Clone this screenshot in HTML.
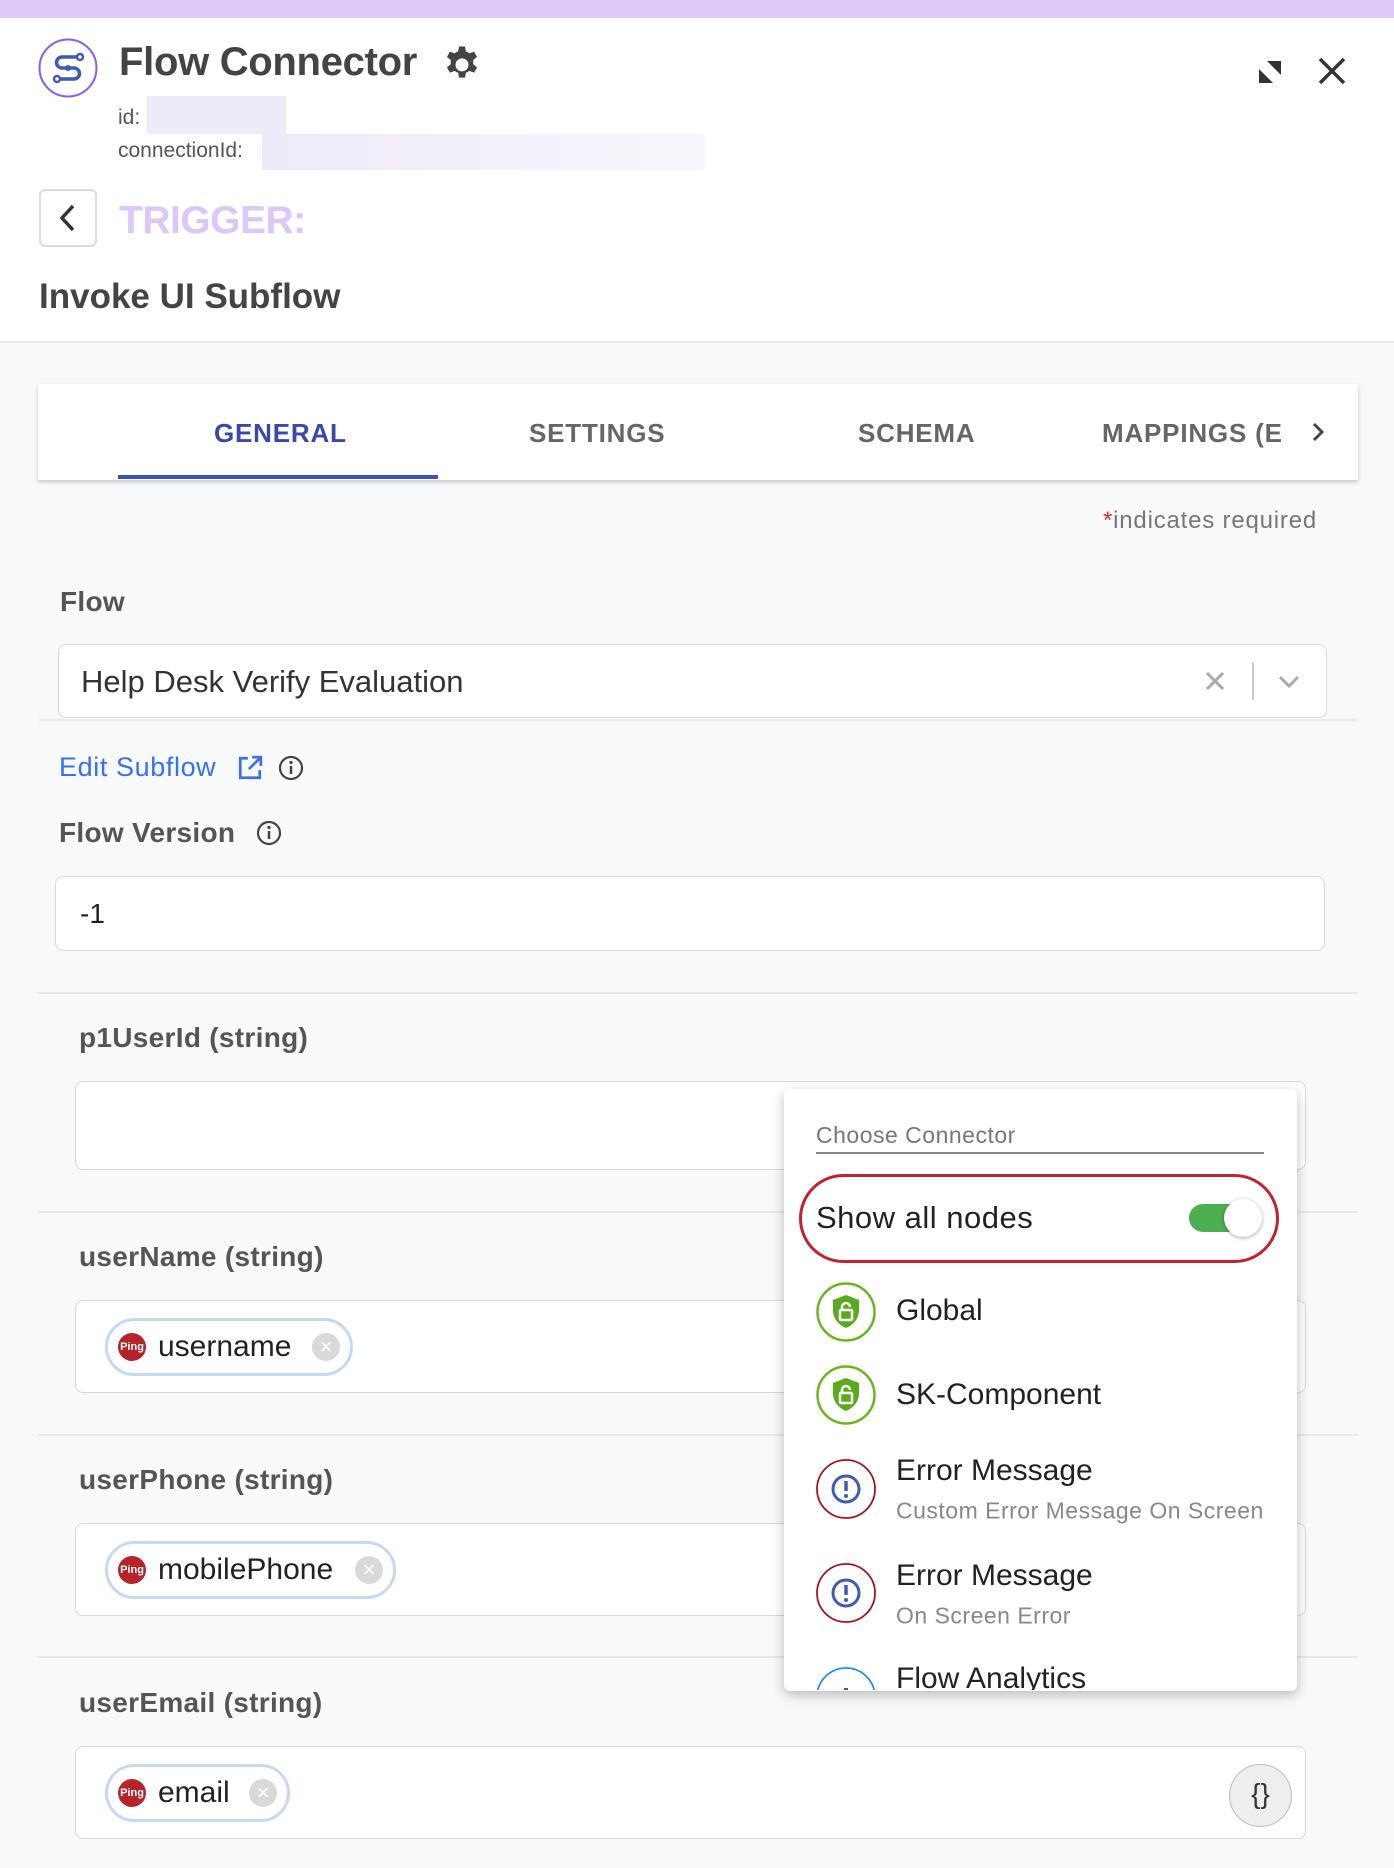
<!DOCTYPE html>
<html><head><meta charset="utf-8"><style>
*{box-sizing:border-box;margin:0;padding:0}
body{width:1394px;height:1868px;overflow:hidden;background:#f8f9fa;font-family:"Liberation Sans",sans-serif;position:relative;color:#333}
.a{position:absolute}
.lbl{position:absolute;font-size:28px;font-weight:bold;color:#555;transform:translateY(-50%);letter-spacing:.3px}
.inp{position:absolute;background:#fff;border:1.5px solid #d6d8dc;border-radius:8px}
.sep{position:absolute;left:38px;width:1320px;height:2px;background:#e6e8ec}
.chip{position:absolute;height:58px;border:3px solid #c7d9f0;border-radius:30px;background:#fff;display:flex;align-items:center;padding-left:10px;font-size:30px;color:#222}
.ping{width:28px;height:28px;border-radius:50%;background:#b5232b;color:#fff;font-size:11px;font-weight:bold;display:flex;align-items:center;justify-content:center;margin-right:12px}
.cx{position:absolute;width:28px;height:28px;border-radius:50%;background:#d9d9d9;color:#fff;font-size:22px;line-height:28px;text-align:center;top:12px}
.row{position:absolute;left:896px;font-size:30px;color:#222;transform:translateY(-50%)}
.sub{position:absolute;left:896px;font-size:23px;color:#888;transform:translateY(-50%);letter-spacing:.5px}
.tab{position:absolute;top:418px;font-size:26px;color:#666;letter-spacing:.8px;font-weight:600}
</style></head><body>
<div class="a" style="left:0;top:0;width:1394px;height:18px;background:#dfc9fa"></div>
<div class="a" style="left:0;top:18px;width:1394px;height:325px;background:#fff;border-bottom:2px solid #e8eaee"></div>
<svg class="a" style="left:38px;top:38px" width="60" height="60" viewBox="0 0 60 60"><circle cx="30" cy="30" r="28.5" fill="#fff" stroke="#8c5cf0" stroke-width="2"/><g fill="none" stroke="#3f5bb0" stroke-width="3.5" stroke-linecap="round"><path d="M42 19H24a5.5 5.5 0 0 0 0 11h12a5.5 5.5 0 0 1 0 11H19"/></g><circle cx="42" cy="19" r="3" fill="#fff" stroke="#3f5bb0" stroke-width="2.5"/><circle cx="19" cy="41" r="3" fill="#fff" stroke="#3f5bb0" stroke-width="2.5"/><circle cx="30" cy="30" r="3" fill="#3f5bb0"/></svg>
<div class="a" style="left:119px;top:40px;font-size:40px;font-weight:bold;color:#444;letter-spacing:-.3px">Flow Connector</div>
<svg class="a" style="left:441px;top:43px" width="42" height="42" viewBox="0 0 24 24"><path fill="#444" fill-rule="evenodd" d="M10.3 1.5h3.4l.5 2.8a8 8 0 0 1 2 1.1l2.7-1 1.7 3-2.2 1.8a8 8 0 0 1 0 2.4l2.2 1.8-1.7 3-2.7-1a8 8 0 0 1-2 1.1l-.5 2.8h-3.4l-.5-2.8a8 8 0 0 1-2-1.1l-2.7 1-1.7-3 2.2-1.8a8 8 0 0 1 0-2.4L3.4 7.4l1.7-3 2.7 1a8 8 0 0 1 2-1.1zM12 8.3a3.7 3.7 0 1 0 0 7.4 3.7 3.7 0 0 0 0-7.4z" transform="translate(0 0.5)"/></svg>
<div class="a" style="left:118px;top:106px;font-size:21px;color:#555">id:</div>
<div class="a" style="left:147px;top:96px;width:139px;height:38px;background:#efeaf8"></div>
<div class="a" style="left:118px;top:139px;font-size:21px;color:#555">connectionId:</div>
<div class="a" style="left:262px;top:134px;width:443px;height:36px;background:linear-gradient(90deg,#efeaf8,#f8f5fc)"></div>
<svg class="a" style="left:1259px;top:61px" width="22" height="22" viewBox="0 0 22 22"><path fill="#333" d="M8 0h14v14zM0 8l14 14H0z"/></svg>
<svg class="a" style="left:1316px;top:55px" width="32" height="32" viewBox="0 0 32 32"><path d="M4 4l24 24M28 4 4 28" stroke="#333" stroke-width="3.5"/></svg>
<div class="a" style="left:39px;top:189px;width:58px;height:58px;border:2px solid #d9dde3;border-radius:6px;background:#fff"></div>
<svg class="a" style="left:56px;top:203px" width="24" height="30" viewBox="0 0 24 30"><path d="M17 3 6 15l11 12" fill="none" stroke="#333" stroke-width="3.5"/></svg>
<div class="a" style="left:119px;top:199px;font-size:39px;font-weight:bold;color:#dcc8f8;letter-spacing:-.5px">TRIGGER:</div>
<div class="a" style="left:39px;top:277px;font-size:35px;font-weight:bold;color:#444">Invoke UI Subflow</div>

<div class="a" style="left:38px;top:384px;width:1320px;height:96px;background:#fff;box-shadow:0 2px 4px rgba(0,0,0,.2)"></div>
<div class="tab" style="left:214px;color:#3949ab">GENERAL</div>
<div class="tab" style="left:529px">SETTINGS</div>
<div class="tab" style="left:858px">SCHEMA</div>
<div class="tab" style="left:1102px;width:179px;overflow:hidden;white-space:nowrap">MAPPINGS (EDIT)</div>
<svg class="a" style="left:1308px;top:420px" width="20" height="24" viewBox="0 0 20 24"><path d="M6 4l8 8-8 8" fill="none" stroke="#444" stroke-width="3"/></svg>
<div class="a" style="left:118px;top:475px;width:320px;height:4px;background:#3f51b5"></div>

<div class="a" style="right:77px;top:507px;font-size:24px;color:#777;letter-spacing:.8px"><span style="color:#d32f2f">*</span>indicates required</div>
<div class="lbl" style="left:60px;top:602px">Flow</div>
<div class="inp" style="left:58px;top:644px;width:1269px;height:74px"></div>
<div class="a" style="left:81px;top:664px;font-size:31px;color:#333">Help Desk Verify Evaluation</div>
<svg class="a" style="left:1204px;top:670px" width="22" height="22" viewBox="0 0 22 22"><path d="M3 3l16 16M19 3 3 19" stroke="#aaa" stroke-width="3"/></svg>
<div class="a" style="left:1252px;top:662px;width:2px;height:38px;background:#ccc"></div>
<svg class="a" style="left:1277px;top:674px" width="24" height="16" viewBox="0 0 24 16"><path d="M3 3l9 9 9-9" fill="none" stroke="#aaa" stroke-width="3"/></svg>
<div class="a" style="left:38px;top:719px;width:1320px;height:2px;background:#e8eaee"></div>
<div class="a" style="left:59px;top:752px;font-size:27px;color:#3a6ff0;letter-spacing:.6px">Edit Subflow</div>
<svg class="a" style="left:237px;top:755px" width="26" height="26" viewBox="0 0 24 24"><path d="M10 3H3v18h18v-7" fill="none" stroke="#3a6ff0" stroke-width="2.5"/><path d="M14 2h8v8M22 2 11 13" fill="none" stroke="#3a6ff0" stroke-width="2.5"/></svg>
<svg class="a" style="left:278px;top:755px" width="26" height="26" viewBox="0 0 26 26"><circle cx="13" cy="13" r="11" fill="none" stroke="#444" stroke-width="2.2"/><path d="M13 11v8" stroke="#444" stroke-width="2.5"/><circle cx="13" cy="7.5" r="1.6" fill="#444"/></svg>
<div class="lbl" style="left:59px;top:833px">Flow Version</div>
<svg class="a" style="left:256px;top:820px" width="26" height="26" viewBox="0 0 26 26"><circle cx="13" cy="13" r="11" fill="none" stroke="#444" stroke-width="2.2"/><path d="M13 11v8" stroke="#444" stroke-width="2.5"/><circle cx="13" cy="7.5" r="1.6" fill="#444"/></svg>
<div class="inp" style="left:55px;top:876px;width:1270px;height:75px"></div>
<div class="a" style="left:80px;top:898px;font-size:28px;color:#222">-1</div>
<div class="sep" style="top:992px"></div>

<div class="lbl" style="left:79px;top:1038px">p1UserId (string)</div>
<div class="inp" style="left:75px;top:1081px;width:1231px;height:89px"></div>
<div class="sep" style="top:1211px"></div>
<div class="lbl" style="left:79px;top:1257px">userName (string)</div>
<div class="inp" style="left:75px;top:1300px;width:1231px;height:93px"></div>
<div class="chip" style="left:105px;top:1318px;width:248px"><div class="ping">Ping</div>username<div class="cx" style="left:204px">×</div></div>
<div class="sep" style="top:1434px"></div>
<div class="lbl" style="left:79px;top:1480px">userPhone (string)</div>
<div class="inp" style="left:75px;top:1523px;width:1231px;height:93px"></div>
<div class="chip" style="left:105px;top:1541px;width:291px"><div class="ping">Ping</div>mobilePhone<div class="cx" style="left:247px">×</div></div>
<div class="sep" style="top:1656px"></div>
<div class="lbl" style="left:79px;top:1703px">userEmail (string)</div>
<div class="inp" style="left:75px;top:1746px;width:1231px;height:93px"></div>
<div class="chip" style="left:105px;top:1764px;width:185px"><div class="ping">Ping</div>email<div class="cx" style="left:141px">×</div></div>
<div class="a" style="left:1229px;top:1764px;width:63px;height:63px;border-radius:50%;background:#eee;border:1.5px solid #bbb;font-size:28px;text-align:center;line-height:58px;color:#333">{}</div>

<div class="a" style="left:784px;top:1089px;width:513px;height:602px;background:#fff;border-radius:6px;box-shadow:0 4px 12px rgba(0,0,0,.25);overflow:hidden">
</div>
<div class="a" style="left:816px;top:1122px;font-size:23px;color:#777;letter-spacing:.5px">Choose Connector</div>
<div class="a" style="left:816px;top:1152px;width:448px;height:1.5px;background:#888"></div>
<div class="a" style="left:799px;top:1174px;width:480px;height:89px;border:3.5px solid #c0222f;border-radius:45px"></div>
<div class="a" style="left:816px;top:1200px;font-size:31px;color:#222;letter-spacing:.5px">Show all nodes</div>
<div class="a" style="left:1189px;top:1204px;width:58px;height:28px;border-radius:14px;background:#4caf50"></div>
<div class="a" style="left:1224px;top:1199px;width:38px;height:38px;border-radius:50%;background:#fff;box-shadow:0 1px 4px rgba(0,0,0,.35)"></div>
<svg class="a" style="left:815px;top:1281px" width="62" height="62" viewBox="0 0 62 62"><circle cx="31" cy="31" r="28.5" fill="#fff" stroke="#6cb521" stroke-width="2.5"/><path d="M31 14l13 5v10c0 9-6 15-13 18-7-3-13-9-13-18V19z" fill="#5aaa1e"/><rect x="25" y="29" width="12" height="10" rx="1" fill="none" stroke="#fff" stroke-width="2.5"/><path d="M27 29v-3a4 4 0 0 1 8 0" fill="none" stroke="#fff" stroke-width="2.5"/></svg>
<div class="row" style="top:1311px">Global</div>
<svg class="a" style="left:815px;top:1364px" width="62" height="62" viewBox="0 0 62 62"><circle cx="31" cy="31" r="28.5" fill="#fff" stroke="#6cb521" stroke-width="2.5"/><path d="M31 14l13 5v10c0 9-6 15-13 18-7-3-13-9-13-18V19z" fill="#5aaa1e"/><rect x="25" y="29" width="12" height="10" rx="1" fill="none" stroke="#fff" stroke-width="2.5"/><path d="M27 29v-3a4 4 0 0 1 8 0" fill="none" stroke="#fff" stroke-width="2.5"/></svg>
<div class="row" style="top:1395px">SK-Component</div>
<svg class="a" style="left:815px;top:1458px" width="62" height="62" viewBox="0 0 62 62"><circle cx="31" cy="31" r="29" fill="#fff" stroke="#a3161f" stroke-width="1.8"/><circle cx="31" cy="31" r="13" fill="none" stroke="#3f5bb0" stroke-width="3"/><path d="M31 23v10" stroke="#3f5bb0" stroke-width="3.5"/><circle cx="31" cy="38" r="2" fill="#3f5bb0"/></svg>
<div class="row" style="top:1471px">Error Message</div>
<div class="sub" style="top:1511px">Custom Error Message On Screen</div>
<svg class="a" style="left:815px;top:1562px" width="62" height="62" viewBox="0 0 62 62"><circle cx="31" cy="31" r="29" fill="#fff" stroke="#a3161f" stroke-width="1.8"/><circle cx="31" cy="31" r="13" fill="none" stroke="#3f5bb0" stroke-width="3"/><path d="M31 23v10" stroke="#3f5bb0" stroke-width="3.5"/><circle cx="31" cy="38" r="2" fill="#3f5bb0"/></svg>
<div class="row" style="top:1576px">Error Message</div>
<div class="sub" style="top:1616px">On Screen Error</div>
<div class="a" style="left:784px;top:1650px;width:513px;height:40px;overflow:hidden;border-radius:0 0 6px 6px">
<svg class="a" style="left:31px;top:16px" width="62" height="62" viewBox="0 0 62 62"><circle cx="31" cy="31" r="29" fill="#fff" stroke="#2a8fd8" stroke-width="1.8"/><path d="M31 22v6" stroke="#3f5bb0" stroke-width="4"/></svg>
<div class="a" style="left:112px;top:12px;font-size:30px;color:#222">Flow Analytics</div>
</div>
</body></html>
